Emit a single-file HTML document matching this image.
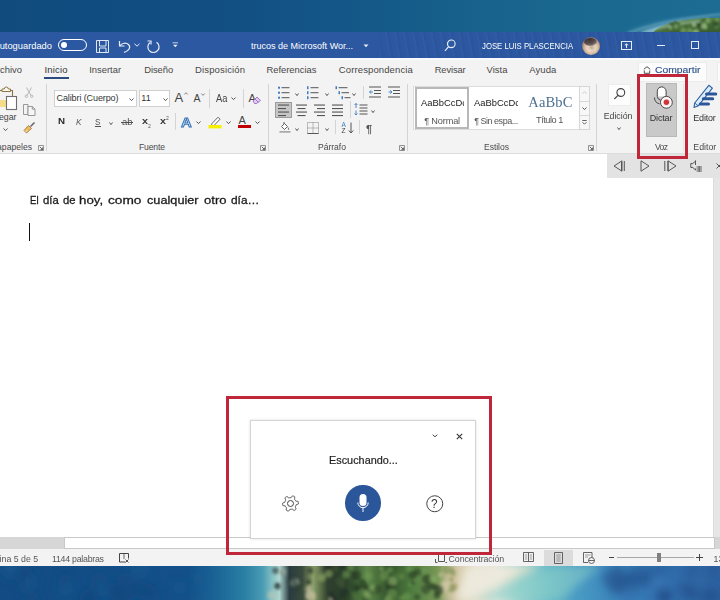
<!DOCTYPE html>
<html><head><meta charset="utf-8">
<style>
*{margin:0;padding:0;box-sizing:border-box}
html,body{width:720px;height:600px;overflow:hidden;background:#fff}
body{position:relative;font-family:"Liberation Sans",sans-serif}
.a{position:absolute}
.t{position:absolute;white-space:nowrap;line-height:1}
svg{position:absolute;overflow:visible}
</style></head><body>
<div class="a" style="left:0;top:0;width:720px;height:32px;background:linear-gradient(90deg,#114b7e 0%,#124e82 30%,#145888 50%,#17618c 65%,#1a6890 80%,#1d6c94 100%)"></div>
<div class="a" style="left:0;top:0;width:720px;height:32px;background:radial-gradient(ellipse 95px 26px at 712px 40px,rgba(170,220,230,.0) 60%,rgba(190,230,235,.6) 68%,rgba(90,160,185,.35) 80%,rgba(30,105,140,0) 100%)"></div>
<div class="a" style="left:652px;top:18px;width:124px;height:36px;border-radius:50%;background:radial-gradient(ellipse at 45% 60%,#2e4e2a 0%,#3f6434 45%,#5a8448 75%,#8cb078 100%)"></div>
<svg style="left:0;top:0" width="720" height="32"><filter id="bl2"><feGaussianBlur stdDeviation="0.9"/></filter><defs><clipPath id="ct"><rect x="0" y="0" width="720" height="32"/></clipPath></defs><g clip-path="url(#ct)"><g filter="url(#bl2)"><path d="M628 33Q655 23 690 18T730 14" fill="none" stroke="#b8e0e6" stroke-width="2" opacity="0.35"/><path d="M642 33Q664 25 700 21" fill="none" stroke="#d8f0f0" stroke-width="2.5" opacity="0.4"/><circle cx="688.4" cy="23.1" r="1.6" fill="#6a9254" opacity="0.8"/><circle cx="690.5" cy="31.3" r="2.6" fill="#6a9254" opacity="0.8"/><circle cx="716.4" cy="26.1" r="2.2" fill="#7da062" opacity="0.8"/><circle cx="707.5" cy="20.5" r="2.5" fill="#7da062" opacity="0.8"/><circle cx="677.3" cy="25.7" r="1.6" fill="#2c4a28" opacity="0.8"/><circle cx="694.1" cy="24.9" r="2.4" fill="#9dbb80" opacity="0.8"/><circle cx="683.7" cy="30.9" r="2.1" fill="#7da062" opacity="0.8"/><circle cx="706.0" cy="27.8" r="1.9" fill="#6a9254" opacity="0.8"/><circle cx="672.4" cy="24.9" r="2.1" fill="#3a5e32" opacity="0.8"/><circle cx="671.6" cy="31.7" r="1.7" fill="#3a5e32" opacity="0.8"/><circle cx="715.5" cy="23.9" r="3.1" fill="#2c4a28" opacity="0.8"/><circle cx="704.0" cy="26.0" r="3.0" fill="#9dbb80" opacity="0.8"/><circle cx="675.1" cy="22.9" r="2.3" fill="#3a5e32" opacity="0.8"/><circle cx="670.4" cy="27.8" r="1.6" fill="#9dbb80" opacity="0.8"/><circle cx="696.0" cy="31.9" r="2.9" fill="#9dbb80" opacity="0.8"/><circle cx="700.7" cy="30.4" r="2.1" fill="#3a5e32" opacity="0.8"/><circle cx="676.2" cy="26.6" r="2.3" fill="#7da062" opacity="0.8"/><circle cx="704.2" cy="19.8" r="1.9" fill="#3a5e32" opacity="0.8"/><circle cx="714.3" cy="25.0" r="1.8" fill="#3a5e32" opacity="0.8"/><circle cx="689.4" cy="30.4" r="2.9" fill="#6a9254" opacity="0.8"/><circle cx="670.9" cy="23.8" r="2.1" fill="#3a5e32" opacity="0.8"/><circle cx="717.1" cy="20.1" r="1.8" fill="#7da062" opacity="0.8"/><circle cx="708.5" cy="20.6" r="2.0" fill="#7da062" opacity="0.8"/><circle cx="680.5" cy="23.2" r="2.5" fill="#7da062" opacity="0.8"/><circle cx="699.0" cy="25.2" r="2.5" fill="#2c4a28" opacity="0.8"/><circle cx="683.1" cy="30.2" r="3.1" fill="#6a9254" opacity="0.8"/><circle cx="678.7" cy="23.6" r="1.7" fill="#3a5e32" opacity="0.8"/></g></g></svg>
<div class="a" style="left:0;top:565px;width:720px;height:35px;background:linear-gradient(90deg,#134c84 0%,#14508a 26%,#1b6496 30%,#2a80a4 34%,#4a9cb4 36.5%,#8cc4c4 38%,#b0d6d0 38.8%,#2a3c40 40.2%,#3a4a3c 42%,#8aa068 43.5%,#30402e 45.5%,#283e2a 48%,#5f8a4a 51%,#33502c 54%,#4c7a3e 57%,#7a9a58 61%,#d4cbb0 63.5%,#e6e0cc 66%,#dfe6dc 69%,#9ed4d0 72%,#6cbcc8 76%,#4a9cc4 80%,#3c86bc 85%,#326fae 92%,#2d62a2 100%)"></div>
<svg style="left:0;top:0" width="720" height="600"><defs><clipPath id="cb"><rect x="0" y="566" width="720" height="34"/></clipPath></defs><filter id="bl"><feGaussianBlur stdDeviation="1.6"/></filter><filter id="bl3"><feGaussianBlur stdDeviation="4"/></filter><g clip-path="url(#cb)"><g filter="url(#bl3)"><path d="M445 566L540 566L505 582L470 600L445 600Z" fill="#e6e0c8" opacity="0.9"/><path d="M470 566L525 566L490 590L468 600L455 600Z" fill="#f0eee4" opacity="0.7"/><path d="M505 584L560 566L600 566L560 600L470 600Z" fill="#8ccfc8" opacity="0.55"/><path d="M445 566L462 566L455 600L445 600Z" fill="#c8b890" opacity="0.8"/><circle cx="668.8" cy="572.8" r="7.7" fill="#22508a" opacity="0.45"/><circle cx="672.6" cy="566.9" r="9.8" fill="#2d66a4" opacity="0.45"/><circle cx="665.3" cy="599.6" r="5.6" fill="#22508a" opacity="0.45"/><circle cx="682.9" cy="568.2" r="7.7" fill="#2d66a4" opacity="0.45"/><circle cx="710.5" cy="593.2" r="7.0" fill="#1f4a82" opacity="0.45"/><circle cx="656.8" cy="570.3" r="7.2" fill="#2d66a4" opacity="0.45"/><circle cx="663.0" cy="569.7" r="7.1" fill="#22508a" opacity="0.45"/><circle cx="711.0" cy="570.4" r="8.9" fill="#22508a" opacity="0.45"/><circle cx="604.3" cy="571.3" r="5.1" fill="#3a7ab8" opacity="0.45"/><circle cx="638.6" cy="578.1" r="8.1" fill="#22508a" opacity="0.45"/><circle cx="660.0" cy="585.8" r="9.3" fill="#3a7ab8" opacity="0.45"/><circle cx="686.1" cy="589.8" r="9.4" fill="#22508a" opacity="0.45"/><circle cx="645.1" cy="580.1" r="7.6" fill="#1f4a82" opacity="0.45"/><circle cx="664.6" cy="595.4" r="7.7" fill="#1f4a82" opacity="0.45"/><circle cx="663.6" cy="594.9" r="8.1" fill="#1f4a82" opacity="0.45"/><circle cx="627.9" cy="591.2" r="9.1" fill="#1f4a82" opacity="0.45"/><circle cx="637.9" cy="576.7" r="9.6" fill="#1f4a82" opacity="0.45"/><circle cx="693.4" cy="572.6" r="5.5" fill="#1f4a82" opacity="0.45"/><circle cx="615.9" cy="569.0" r="6.9" fill="#2d66a4" opacity="0.45"/><circle cx="699.9" cy="580.3" r="8.9" fill="#1f4a82" opacity="0.45"/><circle cx="624.1" cy="587.4" r="9.0" fill="#22508a" opacity="0.45"/><circle cx="624.1" cy="589.2" r="9.6" fill="#3a7ab8" opacity="0.45"/><circle cx="613.8" cy="583.2" r="8.8" fill="#1f4a82" opacity="0.45"/><circle cx="696.3" cy="582.4" r="5.1" fill="#2d66a4" opacity="0.45"/><circle cx="617.6" cy="572.3" r="6.0" fill="#1f4a82" opacity="0.45"/><circle cx="718.8" cy="597.5" r="5.5" fill="#22508a" opacity="0.45"/><circle cx="616.1" cy="589.2" r="5.4" fill="#22508a" opacity="0.45"/><circle cx="639.2" cy="581.9" r="7.6" fill="#2d66a4" opacity="0.45"/><circle cx="625.2" cy="578.7" r="8.2" fill="#22508a" opacity="0.45"/><circle cx="701.3" cy="572.2" r="7.3" fill="#3a7ab8" opacity="0.45"/><circle cx="648.6" cy="572.6" r="5.8" fill="#22508a" opacity="0.45"/><circle cx="638.8" cy="568.9" r="9.2" fill="#2d66a4" opacity="0.45"/><circle cx="668.4" cy="572.5" r="7.9" fill="#3a7ab8" opacity="0.45"/><circle cx="696.6" cy="574.8" r="9.6" fill="#1f4a82" opacity="0.45"/><circle cx="697.8" cy="579.8" r="9.5" fill="#3a7ab8" opacity="0.45"/><circle cx="692.1" cy="592.0" r="7.0" fill="#1f4a82" opacity="0.45"/><circle cx="608.5" cy="577.6" r="7.3" fill="#22508a" opacity="0.45"/><circle cx="706.6" cy="599.7" r="9.5" fill="#22508a" opacity="0.45"/><circle cx="627.9" cy="598.1" r="8.3" fill="#3a7ab8" opacity="0.45"/><circle cx="625.9" cy="579.8" r="5.9" fill="#22508a" opacity="0.45"/><circle cx="89.6" cy="600.0" r="8.2" fill="#11467a" opacity="0.5"/><circle cx="27.5" cy="579.4" r="7.9" fill="#124a80" opacity="0.5"/><circle cx="141.5" cy="591.1" r="6.3" fill="#175a90" opacity="0.5"/><circle cx="116.1" cy="591.9" r="8.2" fill="#124a80" opacity="0.5"/><circle cx="22.6" cy="574.5" r="9.5" fill="#11467a" opacity="0.5"/><circle cx="124.3" cy="580.1" r="7.6" fill="#124a80" opacity="0.5"/><circle cx="146.7" cy="593.5" r="5.4" fill="#11467a" opacity="0.5"/><circle cx="153.7" cy="598.5" r="6.9" fill="#124a80" opacity="0.5"/><circle cx="88.8" cy="599.0" r="9.3" fill="#11467a" opacity="0.5"/><circle cx="140.6" cy="568.0" r="9.7" fill="#175a90" opacity="0.5"/><circle cx="65.4" cy="579.6" r="6.6" fill="#11467a" opacity="0.5"/><circle cx="65.7" cy="588.3" r="7.8" fill="#175a90" opacity="0.5"/><circle cx="152.6" cy="591.4" r="5.1" fill="#124a80" opacity="0.5"/><circle cx="134.7" cy="587.5" r="7.0" fill="#11467a" opacity="0.5"/><circle cx="89.7" cy="596.5" r="8.7" fill="#124a80" opacity="0.5"/><circle cx="133.8" cy="590.6" r="6.6" fill="#124a80" opacity="0.5"/><circle cx="98.8" cy="582.2" r="9.9" fill="#124a80" opacity="0.5"/><circle cx="10.4" cy="569.3" r="9.1" fill="#175a90" opacity="0.5"/><circle cx="33.2" cy="598.6" r="6.2" fill="#11467a" opacity="0.5"/><circle cx="26.5" cy="587.2" r="7.3" fill="#124a80" opacity="0.5"/><circle cx="198.1" cy="578.1" r="5.8" fill="#175a90" opacity="0.5"/><circle cx="101.9" cy="588.7" r="7.3" fill="#175a90" opacity="0.5"/><circle cx="147.1" cy="589.2" r="6.8" fill="#11467a" opacity="0.5"/><circle cx="122.1" cy="599.9" r="9.8" fill="#11467a" opacity="0.5"/><circle cx="29.6" cy="582.4" r="7.5" fill="#175a90" opacity="0.5"/><circle cx="180.4" cy="587.2" r="6.8" fill="#175a90" opacity="0.5"/><circle cx="140.3" cy="590.7" r="8.5" fill="#124a80" opacity="0.5"/><circle cx="145.6" cy="591.6" r="5.9" fill="#124a80" opacity="0.5"/><circle cx="115.5" cy="588.2" r="6.0" fill="#11467a" opacity="0.5"/><circle cx="9.1" cy="568.1" r="6.4" fill="#175a90" opacity="0.5"/></g><g filter="url(#bl)"><circle cx="354.8" cy="585.0" r="4.8" fill="#2c4428" opacity="0.6"/><circle cx="354.7" cy="595.1" r="2.6" fill="#4c7438" opacity="0.6"/><circle cx="359.1" cy="586.9" r="2.6" fill="#2c4428" opacity="0.6"/><circle cx="327.5" cy="569.1" r="4.4" fill="#1c2a24" opacity="0.6"/><circle cx="381.0" cy="579.5" r="3.4" fill="#4c7438" opacity="0.6"/><circle cx="391.0" cy="587.2" r="4.5" fill="#1f301e" opacity="0.6"/><circle cx="282.9" cy="572.5" r="2.7" fill="#1e2c30" opacity="0.6"/><circle cx="414.4" cy="577.1" r="3.8" fill="#6e9a52" opacity="0.6"/><circle cx="367.0" cy="587.8" r="3.5" fill="#1f301e" opacity="0.6"/><circle cx="355.7" cy="575.5" r="5.0" fill="#1f301e" opacity="0.6"/><circle cx="401.5" cy="576.7" r="2.7" fill="#8ab068" opacity="0.6"/><circle cx="277.4" cy="585.1" r="2.3" fill="#1e2c30" opacity="0.6"/><circle cx="426.9" cy="579.1" r="4.9" fill="#1f301e" opacity="0.6"/><circle cx="311.1" cy="597.5" r="2.2" fill="#3c5232" opacity="0.6"/><circle cx="451.4" cy="579.5" r="2.2" fill="#7a9050" opacity="0.6"/><circle cx="308.3" cy="588.9" r="3.0" fill="#c8c0a0" opacity="0.6"/><circle cx="332.9" cy="598.8" r="4.3" fill="#1c2a24" opacity="0.6"/><circle cx="296.6" cy="590.0" r="2.0" fill="#2a3a36" opacity="0.6"/><circle cx="417.9" cy="572.0" r="3.7" fill="#2c4428" opacity="0.6"/><circle cx="365.1" cy="599.5" r="4.3" fill="#2c4428" opacity="0.6"/><circle cx="389.8" cy="570.0" r="3.3" fill="#6e9a52" opacity="0.6"/><circle cx="272.1" cy="595.4" r="4.9" fill="#b8c8b8" opacity="0.6"/><circle cx="327.7" cy="596.1" r="2.6" fill="#3c5232" opacity="0.6"/><circle cx="454.2" cy="586.5" r="3.7" fill="#a8a070" opacity="0.6"/><circle cx="453.0" cy="573.3" r="2.8" fill="#7a9050" opacity="0.6"/><circle cx="332.2" cy="576.1" r="2.2" fill="#1c2a24" opacity="0.6"/><circle cx="310.2" cy="587.6" r="2.0" fill="#c8c0a0" opacity="0.6"/><circle cx="340.0" cy="581.4" r="4.9" fill="#3c5232" opacity="0.6"/><circle cx="424.3" cy="570.6" r="3.2" fill="#6e9a52" opacity="0.6"/><circle cx="328.9" cy="573.8" r="3.8" fill="#8ca864" opacity="0.6"/><circle cx="301.0" cy="587.4" r="3.7" fill="#3c5232" opacity="0.6"/><circle cx="433.4" cy="586.5" r="3.3" fill="#1f301e" opacity="0.6"/><circle cx="292.0" cy="583.4" r="2.8" fill="#b8c8b8" opacity="0.6"/><circle cx="400.9" cy="574.7" r="4.5" fill="#4c7438" opacity="0.6"/><circle cx="361.9" cy="583.7" r="4.8" fill="#1f301e" opacity="0.6"/><circle cx="295.1" cy="582.3" r="4.0" fill="#b8c8b8" opacity="0.6"/><circle cx="384.4" cy="575.5" r="4.8" fill="#6e9a52" opacity="0.6"/><circle cx="409.1" cy="568.4" r="3.2" fill="#6e9a52" opacity="0.6"/><circle cx="283.1" cy="572.0" r="3.1" fill="#b8c8b8" opacity="0.6"/><circle cx="450.1" cy="569.1" r="2.4" fill="#d8ceb0" opacity="0.6"/><circle cx="451.4" cy="588.3" r="4.1" fill="#7a9050" opacity="0.6"/><circle cx="445.3" cy="586.1" r="4.8" fill="#d8ceb0" opacity="0.6"/><circle cx="438.6" cy="589.8" r="4.9" fill="#1f301e" opacity="0.6"/><circle cx="381.5" cy="568.5" r="2.2" fill="#8ab068" opacity="0.6"/><circle cx="330.4" cy="600.0" r="2.2" fill="#c8c0a0" opacity="0.6"/><circle cx="406.9" cy="596.6" r="4.2" fill="#6e9a52" opacity="0.6"/><circle cx="417.2" cy="597.1" r="3.1" fill="#2c4428" opacity="0.6"/><circle cx="436.9" cy="595.6" r="3.3" fill="#1f301e" opacity="0.6"/><circle cx="430.0" cy="585.5" r="3.9" fill="#2c4428" opacity="0.6"/><circle cx="341.4" cy="566.4" r="2.2" fill="#1c2a24" opacity="0.6"/><circle cx="389.0" cy="599.8" r="4.6" fill="#8ab068" opacity="0.6"/><circle cx="343.1" cy="591.0" r="3.7" fill="#3c5232" opacity="0.6"/><circle cx="356.7" cy="584.4" r="3.6" fill="#4c7438" opacity="0.6"/><circle cx="277.5" cy="586.4" r="3.4" fill="#1e2c30" opacity="0.6"/><circle cx="447.2" cy="569.8" r="4.3" fill="#7a9050" opacity="0.6"/><circle cx="440.4" cy="574.7" r="2.0" fill="#d8ceb0" opacity="0.6"/><circle cx="298.2" cy="586.8" r="3.6" fill="#2a3a36" opacity="0.6"/><circle cx="392.8" cy="581.0" r="4.7" fill="#8ab068" opacity="0.6"/><circle cx="346.1" cy="574.5" r="3.9" fill="#6e9a52" opacity="0.6"/><circle cx="433.1" cy="579.1" r="3.7" fill="#8ab068" opacity="0.6"/><circle cx="310.4" cy="570.6" r="3.1" fill="#1c2a24" opacity="0.6"/><circle cx="402.2" cy="598.3" r="2.8" fill="#6e9a52" opacity="0.6"/><circle cx="292.6" cy="582.0" r="4.8" fill="#2a3a36" opacity="0.6"/><circle cx="342.0" cy="583.7" r="4.0" fill="#3c5232" opacity="0.6"/><circle cx="330.6" cy="594.2" r="2.8" fill="#1c2a24" opacity="0.6"/><circle cx="396.1" cy="575.6" r="3.1" fill="#4c7438" opacity="0.6"/><circle cx="275.5" cy="570.6" r="3.4" fill="#1e2c30" opacity="0.6"/><circle cx="412.8" cy="575.1" r="4.3" fill="#1f301e" opacity="0.6"/><circle cx="452.1" cy="569.9" r="2.3" fill="#7a9050" opacity="0.6"/><circle cx="391.9" cy="593.5" r="4.9" fill="#6e9a52" opacity="0.6"/><circle cx="308.5" cy="582.2" r="2.5" fill="#1c2a24" opacity="0.6"/><circle cx="410.2" cy="584.2" r="2.1" fill="#6e9a52" opacity="0.6"/><circle cx="321.8" cy="577.8" r="4.1" fill="#8ca864" opacity="0.6"/><circle cx="344.0" cy="592.9" r="4.7" fill="#1c2a24" opacity="0.6"/><circle cx="347.1" cy="596.4" r="3.2" fill="#2c4428" opacity="0.6"/><circle cx="355.0" cy="587.3" r="4.7" fill="#2c4428" opacity="0.6"/><circle cx="372.7" cy="588.2" r="3.5" fill="#8ab068" opacity="0.6"/><circle cx="356.9" cy="588.1" r="2.6" fill="#1f301e" opacity="0.6"/><circle cx="311.0" cy="596.6" r="4.9" fill="#c8c0a0" opacity="0.6"/><circle cx="370.3" cy="592.9" r="3.0" fill="#1f301e" opacity="0.6"/><circle cx="335.8" cy="568.8" r="3.3" fill="#3c5232" opacity="0.6"/><circle cx="412.6" cy="582.6" r="2.1" fill="#1f301e" opacity="0.6"/><circle cx="350.5" cy="567.2" r="3.6" fill="#6e9a52" opacity="0.6"/><circle cx="358.1" cy="600.0" r="4.7" fill="#4c7438" opacity="0.6"/><circle cx="425.7" cy="589.4" r="4.8" fill="#2c4428" opacity="0.6"/><circle cx="377.9" cy="589.4" r="4.3" fill="#2c4428" opacity="0.6"/><circle cx="368.4" cy="575.9" r="4.2" fill="#6e9a52" opacity="0.6"/><circle cx="367.7" cy="594.7" r="3.7" fill="#8ab068" opacity="0.6"/><circle cx="394.8" cy="598.5" r="4.6" fill="#4c7438" opacity="0.6"/><circle cx="310.1" cy="594.9" r="4.9" fill="#c8c0a0" opacity="0.6"/></g></g></svg>
<div class="a" style="left:0px;top:32px;width:720px;height:26px;background:#2c58a2;"></div>
<div class="t" style="left:-6.50px;top:42.00px;font-size:9.3px;letter-spacing:0.000px;color:#fff;font-family:'Liberation Sans',sans-serif;">Autoguardado</div>
<div class="a" style="left:58px;top:39px;width:29px;height:12px;background:transparent;border:1.3px solid #fff;border-radius:6px"></div>
<div class="a" style="left:61px;top:42px;width:6px;height:6px;background:#fff;border-radius:50%"></div>
<svg style="left:96px;top:39.5px" width="14" height="14" viewBox="0 0 14 14" fill="none" stroke="#dfe7f5" stroke-width="1"><path d="M0.5 0.5H12.5V12.5H0.5Z"/><path d="M3.5 0.5V6H10V0.5"/><path d="M3.5 12.5V8H10V12.5"/></svg>
<svg style="left:118px;top:40px" width="14" height="13" viewBox="0 0 14 13" fill="none" stroke="#e8eef8" stroke-width="1.2"><path d="M1.5 1V6H6.5"/><path d="M1.8 5.8C4 3 8 2.2 10.5 4.5C13 7 11.5 10.5 6 12.5"/></svg>
<svg style="left:134px;top:43px" width="6" height="4" viewBox="0 0 6 4" fill="none" stroke="#e8eef8" stroke-width="1"><path d="M0.5 0.8L3 3.2L5.5 0.8"/></svg>
<svg style="left:146px;top:40px" width="15" height="14" viewBox="0 0 15 14" fill="none" stroke="#e8eef8" stroke-width="1.2"><path d="M4 2.5A5.6 5.6 0 1 0 10.5 2.2"/><path d="M1.5 1H5V4.5"/></svg>
<svg style="left:172px;top:42px" width="7" height="6" viewBox="0 0 7 6" fill="#e8eef8" stroke="#e8eef8" stroke-width="0.8"><path d="M0.5 0.8H6" fill="none"/><path d="M1 2.8L3.3 5.2L5.6 2.8Z" stroke="none"/></svg>
<div class="t" style="left:251.00px;top:42.00px;font-size:9px;letter-spacing:0.005px;color:#fff;font-family:'Liberation Sans',sans-serif;">trucos de Microsoft Wor...</div>
<svg style="left:363px;top:44px" width="6" height="4" viewBox="0 0 6 4" fill="#e8eef8"><path d="M0.5 0.5H5.5L3 3.2Z"/></svg>
<svg style="left:444px;top:39px" width="12" height="13" viewBox="0 0 12 13" fill="none" stroke="#e8eef8" stroke-width="1.2"><circle cx="7.3" cy="4.8" r="3.8"/><path d="M4.6 7.6L1 11.8"/></svg>
<div class="t" style="left:481.80px;top:42.00px;font-size:9.2px;transform:scaleX(0.8460);transform-origin:0 0;color:#fff;font-family:'Liberation Sans',sans-serif;">JOSE LUIS PLASCENCIA</div>
<div class="a" style="left:582px;top:37px;width:18px;height:18px;background:radial-gradient(circle at 52% 58%,#f4e6d6 0%,#e6cfb8 35%,#c8a890 55%,#6a5a60 78%,#a8b0c0 92%,#d0d8e8 100%);border-radius:50%"></div>
<div class="a" style="left:583.5px;top:37.5px;width:13px;height:8px;background:radial-gradient(ellipse at 40% 20%,#1e1a20 0%,#3a3038 50%,rgba(60,50,60,0) 100%);border-radius:50%;opacity:.8"></div>
<div class="a" style="left:588px;top:45px;width:7px;height:5px;background:radial-gradient(ellipse,#a08068 0%,rgba(160,128,104,0) 100%);border-radius:50%;opacity:.5"></div>
<svg style="left:620.5px;top:40.5px" width="11" height="9" viewBox="0 0 11 9" fill="none" stroke="#e8eef8" stroke-width="1"><rect x="0.5" y="0.5" width="10" height="8"/><path d="M3.3 4.3L5.5 2.3L7.7 4.3Z" fill="#e8eef8" stroke="none"/><path d="M5.5 3.5V7"/></svg>
<div class="a" style="left:656.5px;top:45px;width:8px;height:1px;background:#e8eef8;"></div>
<div class="a" style="left:690.8px;top:40.8px;width:8.6px;height:8.4px;background:transparent;border:1px solid #e8eef8"></div>
<div class="a" style="left:380px;top:32px;width:340px;height:26px;background:repeating-linear-gradient(80deg,rgba(255,255,255,0.02) 0 2px,rgba(0,0,0,0.03) 2px 5px,transparent 5px 9px);"></div>
<div class="a" style="left:0px;top:58px;width:720px;height:96px;background:#f4f3f3;"></div>
<div class="a" style="left:0px;top:58px;width:720px;height:2px;background:#f7f9fb;"></div>
<div class="a" style="left:0px;top:153px;width:720px;height:1px;background:#dcdcdc;"></div>
<div class="t" style="left:-9.35px;top:65.00px;font-size:9.4px;letter-spacing:0.000px;color:#474747;font-family:'Liberation Sans',sans-serif;">Archivo</div>
<div class="t" style="left:44.50px;top:65.00px;font-size:9.5px;letter-spacing:0.164px;color:#333;font-family:'Liberation Sans',sans-serif;">Inicio</div>
<div class="a" style="left:44px;top:77px;width:25px;height:2px;background:#2b4a80;"></div>
<div class="t" style="left:89.20px;top:65.00px;font-size:9.4px;letter-spacing:0.019px;color:#474747;font-family:'Liberation Sans',sans-serif;">Insertar</div>
<div class="t" style="left:144.20px;top:65.00px;font-size:9.4px;letter-spacing:-0.052px;color:#474747;font-family:'Liberation Sans',sans-serif;">Diseño</div>
<div class="t" style="left:195.00px;top:65.00px;font-size:9.5px;letter-spacing:0.142px;color:#474747;font-family:'Liberation Sans',sans-serif;">Disposición</div>
<div class="t" style="left:266.50px;top:65.00px;font-size:9.4px;letter-spacing:-0.016px;color:#474747;font-family:'Liberation Sans',sans-serif;">Referencias</div>
<div class="t" style="left:338.80px;top:65.00px;font-size:9.5px;letter-spacing:0.118px;color:#474747;font-family:'Liberation Sans',sans-serif;">Correspondencia</div>
<div class="t" style="left:434.70px;top:66.00px;font-size:9.3px;letter-spacing:-0.087px;color:#474747;font-family:'Liberation Sans',sans-serif;">Revisar</div>
<div class="t" style="left:486.50px;top:65.00px;font-size:9.4px;letter-spacing:0.068px;color:#474747;font-family:'Liberation Sans',sans-serif;">Vista</div>
<div class="t" style="left:529.30px;top:65.00px;font-size:9.5px;letter-spacing:0.058px;color:#474747;font-family:'Liberation Sans',sans-serif;">Ayuda</div>
<div class="a" style="left:637.8px;top:62.3px;width:69.4px;height:20px;background:#fcfcfc;border:1px solid #ececec"></div>
<svg style="left:643px;top:66px" width="8" height="8" viewBox="0 0 8 8" fill="none" stroke="#505050" stroke-width="1"><path d="M0.8 3.3L4 0.7L7.2 3.3"/><path d="M1.3 4.5V7.3H6.7V4.5"/></svg>
<div class="t" style="left:654.70px;top:65.00px;font-size:9.4px;transform:scaleX(1.1026);transform-origin:0 0;color:#2d5089;font-family:'Liberation Sans',sans-serif;-webkit-text-stroke:0.15px #2d5089">Compartir</div>
<div class="a" style="left:716.5px;top:62.3px;width:5px;height:20px;background:#fcfcfc;border:1px solid #ececec"></div>
<div class="a" style="left:0px;top:154px;width:720px;height:383px;background:#fff;"></div>
<div class="a" style="left:607px;top:154px;width:113px;height:24px;background:#e3e3e3;"></div>
<div class="a" style="left:714px;top:178px;width:6px;height:360px;background:#e6e6e6;"></div>
<div class="a" style="left:713px;top:178px;width:1px;height:360px;background:#dcdcdc;"></div>
<div class="a" style="left:0px;top:537px;width:720px;height:12px;background:#d6d6d6;"></div>
<div class="a" style="left:64px;top:537px;width:651px;height:12px;background:#fff;border:1px solid #c8c8c8"></div>
<div class="a" style="left:0px;top:549px;width:720px;height:17px;background:#f3f3f3;"></div>
<div class="a" style="left:46px;top:84px;width:1px;height:67px;background:#d4d4d4;"></div>
<div class="a" style="left:268px;top:84px;width:1px;height:67px;background:#d4d4d4;"></div>
<div class="a" style="left:407px;top:84px;width:1px;height:67px;background:#d4d4d4;"></div>
<div class="a" style="left:596px;top:84px;width:1px;height:67px;background:#d4d4d4;"></div>
<svg style="left:-1px;top:86px" width="20" height="25" viewBox="0 0 20 25" >
<path d="M0.5 4.5H13.5V14" fill="none" stroke="#8c7446" stroke-width="1.1"/>
<path d="M3 4.5V3H5.3A2 2 0 0 1 9.3 3H11.5V5.5H3Z" fill="#fdfaf0" stroke="#8c7446" stroke-width="1"/>
<rect x="0" y="14" width="8" height="7" fill="#f4dc8a"/>
<rect x="7.5" y="10.5" width="10" height="13" fill="#fff" stroke="#6e6e6e" stroke-width="1.1"/>
</svg>
<div class="t" style="left:-1.11px;top:113.00px;font-size:8.8px;letter-spacing:0.000px;color:#444;font-family:'Liberation Sans',sans-serif;">egar</div>
<svg style="left:3px;top:127.5px" width="5" height="3" viewBox="0 0 5 3" fill="none" stroke="#555" stroke-width="1"><path d="M0.5 0.5L2.5 2.6L4.5 0.5"/></svg>
<svg style="left:24px;top:87px" width="10" height="11" viewBox="0 0 10 11" fill="none" stroke="#b0b0b0" stroke-width="0.9"><path d="M2.5 0.5L7 8.5M7.5 0.5L3 8.5"/><circle cx="2.3" cy="9.3" r="1.2"/><circle cx="7.7" cy="9.3" r="1.2"/></svg>
<svg style="left:22.5px;top:103.5px" width="13" height="13" viewBox="0 0 13 13" fill="none" stroke="#8e8e8e" stroke-width="0.9"><path d="M0.5 0.5H5V10.5H0.5Z"/><path d="M5 2.5H9.3L12 5.2V11.5H5Z" fill="#f6f6f6"/><path d="M9.3 2.5V5.2H12"/></svg>
<svg style="left:23px;top:121px" width="13" height="13" viewBox="0 0 13 13" >
<path d="M7.5 5.5L11.5 1.5" stroke="#666" stroke-width="1.6" fill="none"/>
<path d="M1 9.5L5.5 4.5L8.5 7.5L3.5 12Z" fill="#f0b860" stroke="#9a7040" stroke-width="0.8"/>
<path d="M2.5 11L4.5 9" stroke="#fff5d0" stroke-width="0.8"/>
</svg>
<div class="t" style="left:-2.91px;top:143.00px;font-size:8.6px;letter-spacing:0.000px;color:#4a4a4a;font-family:'Liberation Sans',sans-serif;">apapeles</div>
<svg style="left:38px;top:145px" width="6" height="6" viewBox="0 0 6 6" fill="none" stroke-width="0.9"><path d="M0.5 0.5H5.5V5.5H0.5Z" stroke="#888"/><path d="M1.8 1.8L4.6 4.6M4.6 2.5V4.6H2.5" stroke="#555"/></svg>
<div class="a" style="left:53.5px;top:90px;width:83px;height:17px;background:#fff;border:1px solid #d0d0d0"></div>
<div class="t" style="left:56.50px;top:94.00px;font-size:9px;letter-spacing:-0.101px;color:#333;font-family:'Liberation Sans',sans-serif;">Calibri (Cuerpo)</div>
<svg style="left:129px;top:98px" width="5" height="3" viewBox="0 0 5 3" fill="none" stroke="#555" stroke-width="1"><path d="M0.5 0.5L2.5 2.6L4.5 0.5"/></svg>
<div class="a" style="left:138.5px;top:90px;width:31px;height:17px;background:#fff;border:1px solid #d0d0d0"></div>
<div class="t" style="left:141.30px;top:94.00px;font-size:9px;letter-spacing:0.000px;color:#333;font-family:'Liberation Sans',sans-serif;">11</div>
<svg style="left:163px;top:98px" width="5" height="3" viewBox="0 0 5 3" fill="none" stroke="#555" stroke-width="1"><path d="M0.5 0.5L2.5 2.6L4.5 0.5"/></svg>
<div class="t" style="left:174.50px;top:91.00px;font-size:13px;letter-spacing:0.000px;color:#444;font-family:'Liberation Sans',sans-serif;">A</div>
<svg style="left:184px;top:92px" width="4" height="3" viewBox="0 0 4 3" fill="none" stroke="#666" stroke-width="0.8"><path d="M0.3 2.5L2 0.7L3.7 2.5"/></svg>
<div class="t" style="left:193.50px;top:93.00px;font-size:10.5px;letter-spacing:0.000px;color:#444;font-family:'Liberation Sans',sans-serif;">A</div>
<svg style="left:201px;top:92.5px" width="4" height="3" viewBox="0 0 4 3" fill="none" stroke="#666" stroke-width="0.8"><path d="M0.3 0.5L2 2.3L3.7 0.5"/></svg>
<div class="a" style="left:209px;top:89px;width:1px;height:19px;background:#d4d4d4;"></div>
<div class="t" style="left:215.80px;top:93.00px;font-size:10.5px;transform:scaleX(0.8863);transform-origin:0 0;color:#444;font-family:'Liberation Sans',sans-serif;">Aa</div>
<svg style="left:231px;top:96.5px" width="5" height="3" viewBox="0 0 5 3" fill="none" stroke="#555" stroke-width="1"><path d="M0.5 0.5L2.5 2.6L4.5 0.5"/></svg>
<div class="a" style="left:243px;top:89px;width:1px;height:19px;background:#d4d4d4;"></div>
<div class="t" style="left:248.50px;top:93.00px;font-size:11px;letter-spacing:0.000px;color:#444;font-family:'Liberation Sans',sans-serif;">A</div>
<svg style="left:252px;top:96px" width="10" height="8" viewBox="0 0 10 8" ><path d="M1 5L5 1L8.5 4.5L4.5 7.5H2.5Z" fill="#e2cff0" stroke="#9b6cc4" stroke-width="0.9"/><path d="M3 3L6.5 6.5" stroke="#9b6cc4" stroke-width="0.9"/></svg>
<div class="t" style="left:57.50px;top:116.00px;font-size:9.5px;transform:scaleX(1.0234);transform-origin:0 0;color:#2a2a2a;font-family:'Liberation Sans',sans-serif;font-weight:bold;">N</div>
<div class="t" style="left:76.20px;top:118.00px;font-size:9.3px;transform:scaleX(0.8846);transform-origin:0 0;color:#5a5a5a;font-family:'Liberation Sans',sans-serif;font-style:italic;">K</div>
<div class="t" style="left:95.00px;top:118.00px;font-size:9.3px;transform:scaleX(0.8570);transform-origin:0 0;color:#505050;font-family:'Liberation Sans',sans-serif;">S</div>
<div class="a" style="left:94.5px;top:125.6px;width:6.3px;height:1px;background:#505050;"></div>
<svg style="left:109px;top:121.5px" width="4" height="3" viewBox="0 0 4 3" fill="none" stroke="#555" stroke-width="1"><path d="M0.5 0.5L2.0 2.6L3.5 0.5"/></svg>
<div class="t" style="left:121.50px;top:118.00px;font-size:8.6px;transform:scaleX(1.0999);transform-origin:0 0;color:#505050;font-family:'Liberation Sans',sans-serif;">ab</div>
<div class="a" style="left:120.5px;top:122.2px;width:12.5px;height:1px;background:#505050;"></div>
<div class="t" style="left:142.00px;top:116.00px;font-size:9.5px;transform:scaleX(1.1380);transform-origin:0 0;color:#3a3a3a;font-family:'Liberation Sans',sans-serif;font-weight:bold;">x</div>
<div class="t" style="left:148.00px;top:124.00px;font-size:5px;letter-spacing:0.000px;color:#555;font-family:'Liberation Sans',sans-serif;">2</div>
<div class="t" style="left:160.20px;top:116.00px;font-size:9.5px;transform:scaleX(1.1380);transform-origin:0 0;color:#3a3a3a;font-family:'Liberation Sans',sans-serif;font-weight:bold;">x</div>
<div class="t" style="left:166.00px;top:116.00px;font-size:5px;letter-spacing:0.000px;color:#555;font-family:'Liberation Sans',sans-serif;">2</div>
<div class="a" style="left:175px;top:113px;width:1px;height:17px;background:#d4d4d4;"></div>
<div class="t" style="left:180.60px;top:116.00px;font-size:13.5px;transform:scaleX(1.1008);transform-origin:0 0;color:#d6ecfb;font-family:'Liberation Sans',sans-serif;font-weight:bold;-webkit-text-stroke:0.9px #3572b4">A</div>
<svg style="left:195.5px;top:121px" width="5" height="3" viewBox="0 0 5 3" fill="none" stroke="#555" stroke-width="1"><path d="M0.5 0.5L2.5 2.6L4.5 0.5"/></svg>
<svg style="left:208px;top:115px" width="14" height="14" viewBox="0 0 14 14" >
<path d="M4 8.5L10 2.2L12 4.2L6 10.5L3.5 11Z" fill="#fff" stroke="#555" stroke-width="0.9"/>
<rect x="0.5" y="10" width="13" height="3.4" fill="#f4f000"/>
</svg>
<svg style="left:225.5px;top:121px" width="5" height="3" viewBox="0 0 5 3" fill="none" stroke="#555" stroke-width="1"><path d="M0.5 0.5L2.5 2.6L4.5 0.5"/></svg>
<div class="t" style="left:238.60px;top:115.00px;font-size:11px;letter-spacing:0.000px;color:#444;font-family:'Liberation Sans',sans-serif;">A</div>
<div class="a" style="left:237.5px;top:125.3px;width:13px;height:2.5px;background:#c00000;"></div>
<svg style="left:254.5px;top:121px" width="5" height="3" viewBox="0 0 5 3" fill="none" stroke="#555" stroke-width="1"><path d="M0.5 0.5L2.5 2.6L4.5 0.5"/></svg>
<div class="t" style="left:139.00px;top:143.00px;font-size:8.6px;letter-spacing:-0.155px;color:#4a4a4a;font-family:'Liberation Sans',sans-serif;">Fuente</div>
<svg style="left:260px;top:145px" width="6" height="6" viewBox="0 0 6 6" fill="none" stroke-width="0.9"><path d="M0.5 0.5H5.5V5.5H0.5Z" stroke="#888"/><path d="M1.8 1.8L4.6 4.6M4.6 2.5V4.6H2.5" stroke="#555"/></svg>
<svg style="left:0;top:0" width="720" height="600"><rect x="278.0" y="86.7" width="2" height="2" fill="#3c7ec4"/><rect x="281.5" y="87.2" width="8" height="1" fill="#555"/><rect x="278.0" y="91.7" width="2" height="2" fill="#3c7ec4"/><rect x="281.5" y="92.2" width="8" height="1" fill="#555"/><rect x="278.0" y="96.7" width="2" height="2" fill="#3c7ec4"/><rect x="281.5" y="97.2" width="8" height="1" fill="#555"/></svg>
<svg style="left:295.3px;top:92.5px" width="4" height="3" viewBox="0 0 4 3" fill="none" stroke="#555" stroke-width="1"><path d="M0.5 0.5L2.0 2.6L3.5 0.5"/></svg>
<svg style="left:0;top:0" width="720" height="600"><rect x="307.0" y="86.2" width="1.5" height="3" fill="#3c7ec4"/><rect x="310.5" y="87.2" width="8" height="1" fill="#555"/><rect x="307.0" y="91.2" width="1.5" height="3" fill="#3c7ec4"/><rect x="310.5" y="92.2" width="8" height="1" fill="#555"/><rect x="307.0" y="96.2" width="1.5" height="3" fill="#3c7ec4"/><rect x="310.5" y="97.2" width="8" height="1" fill="#555"/></svg>
<svg style="left:324.5px;top:92.5px" width="4" height="3" viewBox="0 0 4 3" fill="none" stroke="#555" stroke-width="1"><path d="M0.5 0.5L2.0 2.6L3.5 0.5"/></svg>
<svg style="left:0;top:0" width="720" height="600"><rect x="335.5" y="86.2" width="1.5" height="3" fill="#3c7ec4"/><rect x="338.5" y="87.2" width="9.0" height="1" fill="#555"/><rect x="338.5" y="91.2" width="1.5" height="3" fill="#3c7ec4"/><rect x="341.5" y="92.2" width="7.5" height="1" fill="#555"/><rect x="341.5" y="96.2" width="1.5" height="3" fill="#3c7ec4"/><rect x="344.5" y="97.2" width="6.0" height="1" fill="#555"/></svg>
<svg style="left:351.5px;top:92.5px" width="4" height="3" viewBox="0 0 4 3" fill="none" stroke="#555" stroke-width="1"><path d="M0.5 0.5L2.0 2.6L3.5 0.5"/></svg>
<div class="a" style="left:363px;top:86px;width:1px;height:13px;background:#d4d4d4;"></div>
<svg style="left:369px;top:86px" width="13" height="12" viewBox="0 0 13 12" ><rect x="0" y="0.5" width="12" height="1" fill="#555"/><rect x="5" y="4" width="7" height="1" fill="#555"/><rect x="5" y="7" width="7" height="1" fill="#555"/><rect x="0" y="10.5" width="12" height="1" fill="#555"/><path d="M0.5 6H4M0.5 6L2.3 4.3M0.5 6L2.3 7.7" stroke="#3c7ec4" stroke-width="0.9" fill="none"/></svg>
<svg style="left:387.5px;top:86px" width="13" height="12" viewBox="0 0 13 12" ><rect x="0" y="0.5" width="12" height="1" fill="#555"/><rect x="5" y="4" width="7" height="1" fill="#555"/><rect x="5" y="7" width="7" height="1" fill="#555"/><rect x="0" y="10.5" width="12" height="1" fill="#555"/><path d="M0.5 6H4M4 6L2.2 4.3M4 6L2.2 7.7" stroke="#3c7ec4" stroke-width="0.9" fill="none"/></svg>
<div class="a" style="left:275px;top:102px;width:16.5px;height:16px;background:#c6c6c6;border:1px solid #9c9c9c"></div>
<svg style="left:0;top:0" width="720" height="600"><rect x="278" y="104.5" width="11" height="1.1" fill="#555"/><rect x="278" y="108" width="8" height="1.1" fill="#555"/><rect x="278" y="111.5" width="11" height="1.1" fill="#555"/><rect x="278" y="115" width="8" height="1.1" fill="#555"/></svg>
<svg style="left:0;top:0" width="720" height="600"><rect x="296.0" y="104.5" width="11" height="1.1" fill="#555"/><rect x="297.5" y="108" width="8" height="1.1" fill="#555"/><rect x="296.0" y="111.5" width="11" height="1.1" fill="#555"/><rect x="297.5" y="115" width="8" height="1.1" fill="#555"/></svg>
<svg style="left:0;top:0" width="720" height="600"><rect x="314" y="104.5" width="11" height="1.1" fill="#555"/><rect x="317" y="108" width="8" height="1.1" fill="#555"/><rect x="314" y="111.5" width="11" height="1.1" fill="#555"/><rect x="317" y="115" width="8" height="1.1" fill="#555"/></svg>
<svg style="left:0;top:0" width="720" height="600"><rect x="332" y="104.5" width="11" height="1.1" fill="#555"/><rect x="332" y="108" width="11" height="1.1" fill="#555"/><rect x="332" y="111.5" width="11" height="1.1" fill="#555"/><rect x="332" y="115" width="11" height="1.1" fill="#555"/></svg>
<div class="a" style="left:349.5px;top:101px;width:1px;height:17px;background:#d4d4d4;"></div>
<svg style="left:354px;top:103px" width="14" height="13" viewBox="0 0 14 13" ><path d="M2 0.5V5M0.5 2L2 0.5L3.5 2M2 12V7.5M0.5 10.5L2 12L3.5 10.5" stroke="#3c7ec4" stroke-width="0.9" fill="none"/><rect x="5.5" y="1.5" width="8" height="1" fill="#555"/><rect x="5.5" y="4.5" width="8" height="1" fill="#555"/><rect x="5.5" y="7.5" width="8" height="1" fill="#555"/><rect x="5.5" y="10.5" width="8" height="1" fill="#555"/></svg>
<svg style="left:371px;top:109.5px" width="4" height="3" viewBox="0 0 4 3" fill="none" stroke="#555" stroke-width="1"><path d="M0.5 0.5L2.0 2.6L3.5 0.5"/></svg>
<svg style="left:278.5px;top:121px" width="12" height="12" viewBox="0 0 12 12" ><path d="M2.5 5.5L5.5 2.5L8.5 5.5L5.5 8.5Z" fill="#fff" stroke="#555" stroke-width="0.9"/><path d="M5 1V3" stroke="#555" stroke-width="0.9"/><path d="M9 6.5Q10 8 9.5 8.7" stroke="#555" stroke-width="0.9" fill="none"/><rect x="0.5" y="10.3" width="11" height="1.2" fill="#888"/></svg>
<svg style="left:295.3px;top:127.5px" width="4" height="3" viewBox="0 0 4 3" fill="none" stroke="#555" stroke-width="1"><path d="M0.5 0.5L2.0 2.6L3.5 0.5"/></svg>
<svg style="left:306.5px;top:121.5px" width="12" height="12" viewBox="0 0 12 12" ><path d="M0.5 0.5H11.5V11.5H0.5ZM6 0.5V11.5M0.5 6H11.5" stroke="#777" stroke-width="0.9" fill="none" stroke-dasharray="1 1"/><path d="M0.5 11.5H11.5" stroke="#555" stroke-width="1"/></svg>
<svg style="left:324.5px;top:127.5px" width="4" height="3" viewBox="0 0 4 3" fill="none" stroke="#555" stroke-width="1"><path d="M0.5 0.5L2.0 2.6L3.5 0.5"/></svg>
<div class="a" style="left:335px;top:120px;width:1px;height:14px;background:#d4d4d4;"></div>
<div class="t" style="left:341.50px;top:122.00px;font-size:6.5px;letter-spacing:0.000px;color:#3c7ec4;font-family:'Liberation Sans',sans-serif;">A</div>
<div class="t" style="left:341.50px;top:128.00px;font-size:6.5px;letter-spacing:0.000px;color:#444;font-family:'Liberation Sans',sans-serif;">Z</div>
<svg style="left:347.5px;top:121.5px" width="6" height="12" viewBox="0 0 6 12" ><path d="M3 0.5V11M0.8 8.5L3 11L5.2 8.5" stroke="#555" stroke-width="1" fill="none"/></svg>
<div class="a" style="left:359px;top:120px;width:1px;height:14px;background:#d4d4d4;"></div>
<div class="t" style="left:366.00px;top:124.00px;font-size:11px;letter-spacing:0.000px;color:#555;font-family:'Liberation Sans',sans-serif;font-weight:bold;">¶</div>
<div class="t" style="left:318.00px;top:143.00px;font-size:8.6px;letter-spacing:-0.034px;color:#4a4a4a;font-family:'Liberation Sans',sans-serif;">Párrafo</div>
<svg style="left:399px;top:145px" width="6" height="6" viewBox="0 0 6 6" fill="none" stroke-width="0.9"><path d="M0.5 0.5H5.5V5.5H0.5Z" stroke="#888"/><path d="M1.8 1.8L4.6 4.6M4.6 2.5V4.6H2.5" stroke="#555"/></svg>
<div class="a" style="left:413px;top:86px;width:177px;height:44px;background:#fff;border:1px solid #dcdcdc"></div>
<div class="a" style="left:415px;top:87.3px;width:54px;height:41.7px;background:#fff;border:2px solid #b8b8b8"></div>
<div class="a" style="left:419px;top:94px;width:45.3px;height:16px;overflow:hidden">
<div class="t" style="left:1.80px;top:4.00px;font-size:9.4px;transform:scaleX(1.0051);transform-origin:0 0;color:#222;font-family:'Liberation Sans',sans-serif;">AaBbCcDc</div>
</div>
<div class="t" style="left:424.20px;top:117.00px;font-size:9.2px;letter-spacing:-0.164px;color:#555;font-family:'Liberation Sans',sans-serif;">¶ Normal</div>
<div class="a" style="left:472px;top:94px;width:46.4px;height:16px;overflow:hidden">
<div class="t" style="left:2.20px;top:4.00px;font-size:9.4px;transform:scaleX(1.0007);transform-origin:0 0;color:#222;font-family:'Liberation Sans',sans-serif;">AaBbCcDc</div>
</div>
<div class="t" style="left:474.20px;top:117.00px;font-size:9px;letter-spacing:-0.488px;color:#555;font-family:'Liberation Sans',sans-serif;">¶ Sin espa...</div>
<div class="t" style="left:528.30px;top:95.00px;font-size:14.5px;letter-spacing:0.125px;color:#4f6f8f;font-family:'Liberation Serif',serif;">AaBbC</div>
<div class="t" style="left:536.00px;top:116.00px;font-size:9.2px;letter-spacing:-0.455px;color:#555;font-family:'Liberation Sans',sans-serif;">Título 1</div>
<div class="a" style="left:578.5px;top:86px;width:11px;height:44px;background:#f7f7f7;border:1px solid #d6d6d6"></div>
<div class="a" style="left:578.5px;top:100.5px;width:11px;height:1px;background:#d6d6d6;"></div>
<div class="a" style="left:578.5px;top:115px;width:11px;height:1px;background:#d6d6d6;"></div>
<svg style="left:581.5px;top:91px" width="5" height="3" viewBox="0 0 5 3" fill="none" stroke="#c4c4c4" stroke-width="0.9"><path d="M0.5 2.6L2.5 0.6L4.5 2.6"/></svg>
<svg style="left:581.5px;top:107px" width="5" height="3" viewBox="0 0 5 3" fill="none" stroke="#555" stroke-width="1"><path d="M0.5 0.5L2.5 2.6L4.5 0.5"/></svg>
<svg style="left:581.5px;top:120px" width="5" height="5" viewBox="0 0 5 5" fill="none" stroke="#555" stroke-width="0.9"><path d="M0.3 0.5H4.7"/><path d="M0.5 2.2L2.5 4.2L4.5 2.2"/></svg>
<div class="t" style="left:484.00px;top:143.00px;font-size:8.6px;letter-spacing:-0.055px;color:#4a4a4a;font-family:'Liberation Sans',sans-serif;">Estilos</div>
<svg style="left:588px;top:145px" width="6" height="6" viewBox="0 0 6 6" fill="none" stroke-width="0.9"><path d="M0.5 0.5H5.5V5.5H0.5Z" stroke="#888"/><path d="M1.8 1.8L4.6 4.6M4.6 2.5V4.6H2.5" stroke="#555"/></svg>
<div class="a" style="left:607.5px;top:84.2px;width:23.3px;height:21.6px;background:#fdfdfd;border:1px solid #ececec"></div>
<svg style="left:612px;top:87px" width="14" height="14" viewBox="0 0 14 14" fill="none" stroke="#444" stroke-width="1.1"><circle cx="8.8" cy="5.5" r="3.9"/><path d="M6 8.3L2.3 12"/></svg>
<div class="t" style="left:603.70px;top:112.00px;font-size:8.8px;letter-spacing:-0.011px;color:#444;font-family:'Liberation Sans',sans-serif;">Edición</div>
<svg style="left:616.5px;top:126.5px" width="4" height="3" viewBox="0 0 4 3" fill="none" stroke="#555" stroke-width="1"><path d="M0.5 0.5L2.0 2.6L3.5 0.5"/></svg>
<div class="a" style="left:645.8px;top:83.3px;width:31px;height:54.2px;background:#c9c9c9;border:1px solid #b9b9b9"></div>
<svg style="left:652px;top:84px" width="22" height="26" viewBox="0 0 22 26" >
<path d="M5.3 12.5V7.3A4.4 4.4 0 0 1 14.1 7.3V12.5" fill="#fff" stroke="#444" stroke-width="1"/>
<path d="M5.3 12.5A4.4 4.4 0 0 0 8.5 16.3" fill="none" stroke="#444" stroke-width="1"/>
<path d="M2.5 13.5A6.5 6.5 0 0 0 7.5 19.8" fill="none" stroke="#444" stroke-width="1"/>
<circle cx="14.4" cy="18.3" r="5.9" fill="#fff" stroke="#444" stroke-width="1"/>
<circle cx="14.4" cy="18.3" r="4" fill="#fbe9ea"/>
<circle cx="14.4" cy="18.3" r="2.7" fill="#d13438"/>
</svg>
<div class="t" style="left:649.70px;top:114.00px;font-size:9px;letter-spacing:-0.141px;color:#333;font-family:'Liberation Sans',sans-serif;">Dictar</div>
<div class="t" style="left:655.00px;top:143.00px;font-size:8.6px;letter-spacing:-0.673px;color:#4a4a4a;font-family:'Liberation Sans',sans-serif;">Voz</div>
<div class="a" style="left:682.5px;top:84px;width:1px;height:67px;background:#e4e4e4;"></div>
<svg style="left:692px;top:85px" width="26" height="24" viewBox="0 0 26 24" >
<path d="M2 22.5L2.7 18L16.8 0.3L20.4 3.1L6.3 20.8Z" fill="#dcecfa" stroke="#2a5fa0" stroke-width="1.1" stroke-linejoin="round"/>
<path d="M2.7 18L6.3 20.8" stroke="#2a5fa0" stroke-width="0.9"/>
<path d="M14.5 9H23.8M11.3 13.7H20.7M8.2 18.9H16.5" stroke="#2b579a" stroke-width="3" stroke-linecap="round"/>
</svg>
<div class="t" style="left:693.30px;top:114.00px;font-size:9px;letter-spacing:-0.202px;color:#333;font-family:'Liberation Sans',sans-serif;">Editor</div>
<div class="t" style="left:693.30px;top:143.00px;font-size:8.8px;letter-spacing:0.002px;color:#4a4a4a;font-family:'Liberation Sans',sans-serif;">Editor</div>
<svg style="left:613px;top:160px" width="14" height="12" viewBox="0 0 14 12" fill="none" stroke="#555" stroke-width="1"><path d="M9 0.8L1 6L9 11.2Z"/><path d="M8.5 2V11M11.3 1V11"/></svg>
<svg style="left:639.5px;top:160px" width="10" height="12" viewBox="0 0 10 12" fill="none" stroke="#555" stroke-width="1"><path d="M1 0.8L9 6L1 11.2Z"/></svg>
<svg style="left:663.5px;top:160px" width="13" height="12" viewBox="0 0 13 12" fill="none" stroke="#555" stroke-width="1"><path d="M4 0.8L12 6L4 11.2Z"/><path d="M0.8 1V11M4 1V11"/></svg>
<svg style="left:690px;top:159.5px" width="13" height="13" viewBox="0 0 13 13" fill="none" stroke="#555" stroke-width="1"><path d="M5.5 0.5V5M5.5 8.5V10L2.8 7.5H0.8V3.5H2.8L5.5 1"/><path d="M6.5 7H12M6.5 9H12M6.5 11H12M9.2 6V12" stroke-width="0.9"/></svg>
<svg style="left:716px;top:163px" width="6" height="6" viewBox="0 0 6 6" fill="none" stroke="#555" stroke-width="1"><path d="M0.5 0.5L5.5 5.5M5.5 0.5L0.5 5.5"/></svg>
<div class="t" style="left:29.70px;top:195.00px;font-size:11.8px;transform:scaleX(0.8189);transform-origin:0 0;color:#1a1a1a;font-family:'Liberation Sans',sans-serif;-webkit-text-stroke:0.3px #1a1a1a">El</div>
<div class="t" style="left:42.50px;top:195.00px;font-size:11.8px;transform:scaleX(0.9598);transform-origin:0 0;color:#1a1a1a;font-family:'Liberation Sans',sans-serif;-webkit-text-stroke:0.3px #1a1a1a">día</div>
<div class="t" style="left:62.50px;top:195.00px;font-size:11.8px;transform:scaleX(0.9543);transform-origin:0 0;color:#1a1a1a;font-family:'Liberation Sans',sans-serif;-webkit-text-stroke:0.3px #1a1a1a">de</div>
<div class="t" style="left:79.20px;top:195.00px;font-size:11.8px;transform:scaleX(1.1253);transform-origin:0 0;color:#1a1a1a;font-family:'Liberation Sans',sans-serif;-webkit-text-stroke:0.3px #1a1a1a">hoy,</div>
<div class="t" style="left:108.30px;top:195.00px;font-size:11.8px;transform:scaleX(1.1577);transform-origin:0 0;color:#1a1a1a;font-family:'Liberation Sans',sans-serif;-webkit-text-stroke:0.3px #1a1a1a">como</div>
<div class="t" style="left:146.70px;top:195.00px;font-size:11.8px;transform:scaleX(1.0771);transform-origin:0 0;color:#1a1a1a;font-family:'Liberation Sans',sans-serif;-webkit-text-stroke:0.3px #1a1a1a">cualquier</div>
<div class="t" style="left:204.20px;top:195.00px;font-size:11.8px;transform:scaleX(1.1054);transform-origin:0 0;color:#1a1a1a;font-family:'Liberation Sans',sans-serif;-webkit-text-stroke:0.3px #1a1a1a">otro</div>
<div class="t" style="left:230.80px;top:195.00px;font-size:11.8px;transform:scaleX(1.0070);transform-origin:0 0;color:#1a1a1a;font-family:'Liberation Sans',sans-serif;-webkit-text-stroke:0.3px #1a1a1a">día…</div>
<div class="a" style="left:29px;top:223px;width:1px;height:18px;background:#111;"></div>
<div class="a" style="left:250px;top:420px;width:226px;height:119px;background:#fff;border:1px solid #d4d4d4;box-shadow:0 0 3px rgba(0,0,0,.12)"></div>
<svg style="left:432px;top:434px" width="6" height="4" viewBox="0 0 6 4" fill="none" stroke="#444" stroke-width="1"><path d="M0.7 0.7L3 2.8L5.3 0.7"/></svg>
<svg style="left:455.5px;top:432.5px" width="7" height="7" viewBox="0 0 7 7" fill="none" stroke="#333" stroke-width="1.1"><path d="M0.8 0.8L6.2 6.2M6.2 0.8L0.8 6.2"/></svg>
<div class="t" style="left:328.80px;top:455.00px;font-size:11.2px;transform:scaleX(0.9717);transform-origin:0 0;color:#222;font-family:'Liberation Sans',sans-serif;-webkit-text-stroke:0.2px #222">Escuchando...</div>
<div class="a" style="left:345.2px;top:485.4px;width:35.6px;height:35.6px;background:#2b579a;border-radius:50%"></div>
<svg style="left:356px;top:493px" width="14" height="20" viewBox="0 0 14 20" ><rect x="3.5" y="1" width="7" height="12" rx="3.5" fill="#fff"/><path d="M1.8 9.5A5.2 5.2 0 0 0 12.2 9.5" fill="none" stroke="#fff" stroke-width="1"/><path d="M7 14.7V19" stroke="#fff" stroke-width="1"/></svg>
<svg style="left:282px;top:494.5px" width="17" height="17" viewBox="0 0 17 17" fill="none" stroke="#444" stroke-width="1"><path d="M16.13 6.47L16.19 6.67L16.23 6.87L16.27 7.07L16.30 7.28L16.33 7.48L16.36 7.69L16.38 7.89L16.39 8.10L16.40 8.31L16.40 8.51L16.40 8.72L16.39 8.93L16.03 9.11L15.66 9.27L15.29 9.41L14.92 9.53L14.54 9.63L14.17 9.72L14.14 9.86L14.10 10.01L14.06 10.16L14.01 10.30L13.96 10.45L13.91 10.59L13.85 10.73L13.79 10.87L13.73 11.01L13.66 11.14L13.59 11.28L13.52 11.41L13.44 11.54L13.36 11.67L13.27 11.79L13.19 11.92L13.37 12.25L13.54 12.60L13.70 12.96L13.84 13.33L13.97 13.71L14.08 14.10L13.93 14.24L13.78 14.38L13.62 14.52L13.46 14.65L13.30 14.78L13.13 14.90L12.96 15.02L12.79 15.13L12.62 15.24L12.44 15.35L12.26 15.45L12.07 15.55L11.74 15.32L11.42 15.08L11.11 14.83L10.82 14.57L10.54 14.30L10.28 14.02L10.14 14.06L9.99 14.11L9.84 14.14L9.70 14.18L9.55 14.20L9.40 14.23L9.25 14.25L9.10 14.27L8.94 14.28L8.79 14.29L8.64 14.30L8.49 14.30L8.34 14.30L8.19 14.29L8.03 14.28L7.88 14.27L7.69 14.60L7.47 14.92L7.24 15.23L6.99 15.54L6.72 15.84L6.44 16.13L6.24 16.07L6.05 16.01L5.85 15.94L5.66 15.87L5.46 15.79L5.27 15.71L5.09 15.62L4.90 15.53L4.72 15.44L4.54 15.33L4.36 15.23L4.19 15.12L4.21 14.71L4.26 14.32L4.32 13.93L4.40 13.54L4.50 13.17L4.61 12.80L4.50 12.70L4.39 12.59L4.29 12.48L4.18 12.37L4.08 12.26L3.99 12.14L3.89 12.02L3.80 11.90L3.71 11.78L3.63 11.65L3.55 11.52L3.47 11.39L3.40 11.26L3.33 11.12L3.26 10.99L3.20 10.85L2.81 10.84L2.43 10.82L2.04 10.77L1.65 10.71L1.26 10.63L0.87 10.53L0.81 10.33L0.77 10.13L0.73 9.93L0.70 9.72L0.67 9.52L0.64 9.31L0.62 9.11L0.61 8.90L0.60 8.69L0.60 8.49L0.60 8.28L0.61 8.07L0.97 7.89L1.34 7.73L1.71 7.59L2.08 7.47L2.46 7.37L2.83 7.28L2.86 7.14L2.90 6.99L2.94 6.84L2.99 6.70L3.04 6.55L3.09 6.41L3.15 6.27L3.21 6.13L3.27 5.99L3.34 5.86L3.41 5.72L3.48 5.59L3.56 5.46L3.64 5.33L3.73 5.21L3.81 5.08L3.63 4.75L3.46 4.40L3.30 4.04L3.16 3.67L3.03 3.29L2.92 2.90L3.07 2.76L3.22 2.62L3.38 2.48L3.54 2.35L3.70 2.22L3.87 2.10L4.04 1.98L4.21 1.87L4.38 1.76L4.56 1.65L4.74 1.55L4.93 1.45L5.26 1.68L5.58 1.92L5.89 2.17L6.18 2.43L6.46 2.70L6.72 2.98L6.86 2.94L7.01 2.89L7.16 2.86L7.30 2.82L7.45 2.80L7.60 2.77L7.75 2.75L7.90 2.73L8.06 2.72L8.21 2.71L8.36 2.70L8.51 2.70L8.66 2.70L8.81 2.71L8.97 2.72L9.12 2.73L9.31 2.40L9.53 2.08L9.76 1.77L10.01 1.46L10.28 1.16L10.56 0.87L10.76 0.93L10.95 0.99L11.15 1.06L11.34 1.13L11.54 1.21L11.73 1.29L11.91 1.38L12.10 1.47L12.28 1.56L12.46 1.67L12.64 1.77L12.81 1.88L12.79 2.29L12.74 2.68L12.68 3.07L12.60 3.46L12.50 3.83L12.39 4.20L12.50 4.30L12.61 4.41L12.71 4.52L12.82 4.63L12.92 4.74L13.01 4.86L13.11 4.98L13.20 5.10L13.29 5.22L13.37 5.35L13.45 5.48L13.53 5.61L13.60 5.74L13.67 5.88L13.74 6.01L13.80 6.15L14.19 6.16L14.57 6.18L14.96 6.23L15.35 6.29L15.74 6.37L16.13 6.47Z" stroke-linejoin="round"/><circle cx="8.5" cy="8.5" r="3"/></svg>
<svg style="left:425.5px;top:494.5px" width="18" height="18" viewBox="0 0 18 18" fill="none" stroke="#444" stroke-width="1"><circle cx="8.75" cy="8.75" r="8"/></svg>
<div class="t" style="left:431.00px;top:498.00px;font-size:12px;transform:scaleX(0.9760);transform-origin:0 0;color:#333;font-family:'Liberation Sans',sans-serif;">?</div>
<div class="t" style="left:-16.11px;top:555.00px;font-size:8.8px;letter-spacing:0.000px;color:#555;font-family:'Liberation Sans',sans-serif;">Página 5 de 5</div>
<div class="t" style="left:52.00px;top:555.00px;font-size:8.8px;letter-spacing:-0.261px;color:#555;font-family:'Liberation Sans',sans-serif;">1144 palabras</div>
<svg style="left:119px;top:553px" width="12" height="10" viewBox="0 0 12 10" fill="none" stroke="#444" stroke-width="1"><path d="M6.5 9H0.5V0.5H9.5V5.5"/><path d="M5 0.5V6" stroke-width="0.8"/><path d="M6.5 6.5L9.5 9.5M9.5 6.5L6.5 9.5" stroke-width="0.9"/></svg>
<svg style="left:434.5px;top:552px" width="13" height="11" viewBox="0 0 13 11" fill="none" stroke="#555" stroke-width="1"><path d="M3.5 0.5H7L9.5 3V9.5H3.5Z"/><path d="M0.5 7V10.5H2.5M10.5 10.5H12"/></svg>
<div class="t" style="left:448.60px;top:555.00px;font-size:8.8px;letter-spacing:-0.096px;color:#555;font-family:'Liberation Sans',sans-serif;">Concentración</div>
<svg style="left:523px;top:552px" width="11" height="10" viewBox="0 0 11 10" fill="none" stroke="#555" stroke-width="0.9"><path d="M0.5 0.5H10.5V9.5H0.5ZM5.5 0.5V9.5"/><path d="M1.8 3H4.2M1.8 5H4.2M1.8 7H4.2M6.8 3H9.2M6.8 5H9.2M6.8 7H9.2" stroke-width="0.7" stroke="#777"/></svg>
<div class="a" style="left:544.4px;top:550px;width:28.3px;height:16px;background:#dcdcdc;"></div>
<svg style="left:554px;top:551.5px" width="9" height="12" viewBox="0 0 9 12" fill="none" stroke="#555" stroke-width="0.9"><path d="M0.5 0.5H8.5V11.5H0.5Z"/><path d="M2.3 3H6.7M2.3 5H6.7M2.3 7H6.7M2.3 9H6.7" stroke-width="0.7" stroke="#777"/></svg>
<svg style="left:583px;top:551.5px" width="12" height="12" viewBox="0 0 12 12" fill="none" stroke="#555" stroke-width="0.9"><path d="M0.5 0.5H9V6M0.5 0.5V10.5H5"/><path d="M2 3H7.5M2 5H5" stroke-width="0.7" stroke="#777"/><circle cx="8.5" cy="8.5" r="3"/><path d="M5.5 8.5H11.5"/></svg>
<div class="a" style="left:608.5px;top:557px;width:5px;height:1px;background:#444;"></div>
<div class="a" style="left:617px;top:557px;width:77px;height:1px;background:#a8a8a8;"></div>
<div class="a" style="left:657px;top:553.3px;width:3.6px;height:9px;background:#808080;"></div>
<div class="a" style="left:696px;top:557px;width:6.5px;height:1px;background:#444;"></div>
<div class="a" style="left:698.75px;top:554px;width:1px;height:7px;background:#444;"></div>
<div class="t" style="left:713.50px;top:555.00px;font-size:8.8px;letter-spacing:0.000px;color:#555;font-family:'Liberation Sans',sans-serif;">13</div>
<div class="a" style="left:637.4px;top:74px;width:51px;height:85px;background:transparent;border:3.9px solid #bf263a"></div>
<div class="a" style="left:225.6px;top:396.3px;width:266.4px;height:158.4px;background:transparent;border:3.9px solid #bf263a"></div></body></html>
